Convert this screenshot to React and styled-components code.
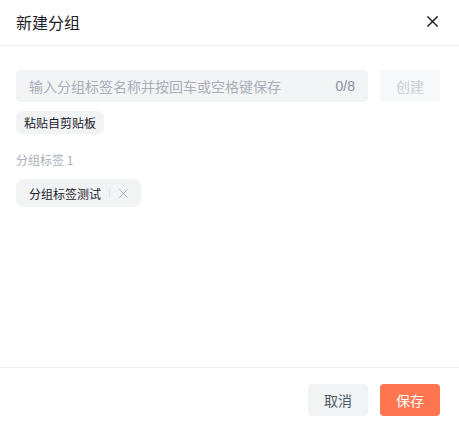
import styled, { createGlobalStyle } from 'styled-components';

const GlobalStyle = createGlobalStyle`
	html, body {
		margin: 0;
		padding: 0;
		background: #ffffff;
	}
	body {
		font-family: "Noto Sans CJK SC", "Liberation Sans", sans-serif;
	}
`;

const Dialog = styled.div`
	width: 459px;
	height: 429px;
	display: flex;
	flex-direction: column;
	background: #fff;
	box-sizing: border-box;
`;

const Header = styled.div`
	height: 46px;
	display: flex;
	align-items: center;
	justify-content: space-between;
	padding: 0 20px 0 16px;
	border-bottom: 1px solid #f0f1f3;
	box-sizing: border-box;
`;

const Title = styled.div`
	font-size: 16px;
	color: #1d2129;
	line-height: 22px;
	margin-top: -2px;
`;

const CloseButton = styled.button`
	border: none;
	background: none;
	padding: 0;
	width: 14px;
	height: 14px;
	display: flex;
	align-items: center;
	justify-content: center;
	cursor: pointer;
	margin-top: -3px;
`;

const Body = styled.div`
	flex: 1;
	padding: 24px 19px 0 16px;
	display: flex;
	flex-direction: column;
`;

const InputRow = styled.div`
	display: flex;
	gap: 12px;
`;

const InputBox = styled.div`
	flex: 1;
	height: 32px;
	border-radius: 4px;
	background: #f2f3f5;
	display: flex;
	align-items: center;
	padding: 0 13px 0 13px;
	box-sizing: border-box;
	font-size: 14px;
`;

const Placeholder = styled.span`
	flex: 1;
	color: #a9aeb8;
	white-space: nowrap;
`;

const Counter = styled.span`
	color: #86909c;
	font-family: "Liberation Sans", sans-serif;
	font-size: 14px;
`;

const Button = styled.button`
	width: 60px;
	height: 32px;
	border: none;
	border-radius: 4px;
	font-family: inherit;
	font-size: 14px;
	padding: 0;
	cursor: pointer;
	background: ${(p) => (p.$primary ? '#ff7650' : p.$disabled ? '#f7f8fa' : '#f2f3f5')};
	color: ${(p) => (p.$primary ? '#ffffff' : p.$disabled ? '#c9cdd4' : '#4e5969')};
`;

const PasteChip = styled.button`
	align-self: flex-start;
	margin-top: 9px;
	height: 23px;
	padding: 0 8px;
	border: none;
	border-radius: 6px;
	background: #f2f3f5;
	color: #1d2129;
	font-family: inherit;
	font-size: 12px;
	cursor: pointer;
`;

const GroupLabel = styled.div`
	margin-top: 17px;
	font-size: 12px;
	color: #a9aeb8;
	line-height: 17px;
`;

const TagList = styled.div`
	display: flex;
	flex-wrap: wrap;
	gap: 8px;
	margin-top: 11px;
`;

const Tag = styled.div`
	height: 28px;
	display: flex;
	align-items: center;
	padding: 0 13px;
	border-radius: 8px;
	background: #f2f3f5;
	font-size: 12px;
	color: #1d2129;
`;

const Divider = styled.span`
	width: 1px;
	height: 10px;
	background: #e5e6eb;
	margin: 0 9px 0 8px;
`;

const TagClose = styled.span`
	display: flex;
	align-items: center;
`;

const Footer = styled.div`
	height: 62px;
	border-top: 1px solid #f0f1f3;
	display: flex;
	justify-content: flex-end;
	align-items: flex-start;
	gap: 12px;
	padding: 16px 19px 0 0;
	box-sizing: border-box;
`;

const XIcon = ({ size, color, width }) => (
	<svg width={size} height={size} viewBox="0 0 12 12">
		<path d="M1 1L11 11M11 1L1 11" stroke={color} strokeWidth={width} strokeLinecap="square" fill="none" />
	</svg>
);

const App = () => {
	const tags = ['分组标签测试'];
	return (
		<>
			<GlobalStyle />
			<Dialog>
				<Header>
					<Title>新建分组</Title>
					<CloseButton>
						<XIcon size={11} color="#1d2129" width={1.6} />
					</CloseButton>
				</Header>
				<Body>
					<InputRow>
						<InputBox>
							<Placeholder>输入分组标签名称并按回车或空格键保存</Placeholder>
							<Counter>0/8</Counter>
						</InputBox>
						<Button $disabled>创建</Button>
					</InputRow>
					<PasteChip>粘贴自剪贴板</PasteChip>
					<GroupLabel>分组标签 1</GroupLabel>
					<TagList>
						{tags.map((t) => (
							<Tag key={t}>
								{t}
								<Divider />
								<TagClose>
									<XIcon size={9} color="#a9aeb8" width={1.3} />
								</TagClose>
							</Tag>
						))}
					</TagList>
				</Body>
				<Footer>
					<Button>取消</Button>
					<Button $primary>保存</Button>
				</Footer>
			</Dialog>
		</>
	);
};

export default App;
